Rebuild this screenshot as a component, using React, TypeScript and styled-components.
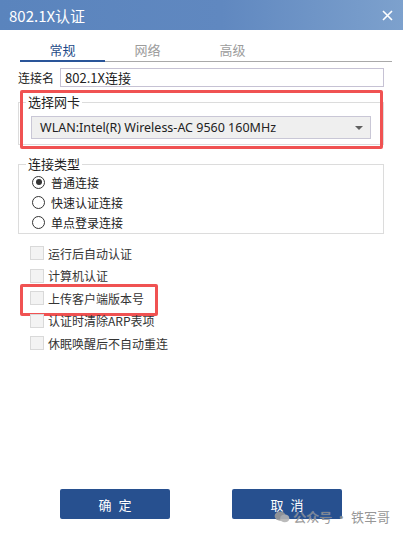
import React from 'react'
import styled, { createGlobalStyle } from 'styled-components'

const GlobalStyle = createGlobalStyle`
  html, body {
    margin: 0;
    padding: 0;
    background: #ffffff;
  }
  body {
    font-family: "Noto Sans CJK SC", "Noto Sans", sans-serif;
    color: #222;
  }
`

const tabs = ['常规', '网络', '高级']
const radios = ['普通连接', '快速认证连接', '单点登录连接']
const options = ['运行后自动认证', '计算机认证', '上传客户端版本号', '认证时清除ARP表项', '休眠唤醒后不自动重连']

const App: React.FC = () => {
  return (
    <Window>
      <GlobalStyle />
      <TitleBar>
        <Title>802.1X认证</Title>
        <Close>
          <svg width="11" height="11" viewBox="0 0 11 11">
            <path d="M1 1L10 10M10 1L1 10" stroke="#fff" strokeWidth="1.6" />
          </svg>
        </Close>
      </TitleBar>

      <Body>
        <TabBar>
          {tabs.map((t, i) => (
            <Tab key={t} $active={i === 0}>
              {t}
            </Tab>
          ))}
        </TabBar>

        <NameRow>
          <Label>连接名</Label>
          <Input>802.1X连接</Input>
        </NameRow>

        <Group $top={15} $bottom={5}>
          <Legend>选择网卡</Legend>
          <Select>
            <span>WLAN:Intel(R) Wireless-AC 9560 160MHz</span>
            <Caret />
          </Select>
          <Mark style={{ left: 1, top: -13, width: 357, height: 53 }} />
        </Group>

        <Group $top={19} $bottom={1}>
          <Legend>连接类型</Legend>
          <RadioList>
            {radios.map((r, i) => (
              <RadioRow key={r}>
                <Radio $checked={i === 0} />
                <span>{r}</span>
              </RadioRow>
            ))}
          </RadioList>
        </Group>

        <CheckList>
          {options.map((o, i) => (
            <CheckRow key={o}>
              <Box />
              <span>{o}</span>
              {i === 2 && <Mark style={{ left: -10, top: -3, width: 132, height: 26 }} />}
            </CheckRow>
          ))}
        </CheckList>

        <Footer>
          <Button>确定</Button>
          <Button>取消</Button>
          <Watermark>
            <svg width="16" height="12" viewBox="0 0 17 13">
              <ellipse cx="6.5" cy="5.5" rx="6" ry="5" fill="#9a9a9a" />
              <ellipse cx="11.5" cy="8" rx="5" ry="4.3" fill="#b4b4b4" />
            </svg>
            <span>公众号 · 铁军哥</span>
          </Watermark>
        </Footer>
      </Body>
    </Window>
  )
}

const Window = styled.div`
  width: 403px;
  height: 533px;
  display: flex;
  flex-direction: column;
  overflow: hidden;
`

const TitleBar = styled.div`
  height: 30px;
  flex: none;
  display: flex;
  align-items: center;
  justify-content: space-between;
  padding: 0 10px 0 9px;
  background: linear-gradient(90deg, #5a84bd 0%, #6088c0 55%, #7da1cd 100%);
`

const Title = styled.div`
  color: #fff;
  font-size: 15px;
  line-height: 1;
`

const Close = styled.div`
  display: flex;
  margin-top: 1px;
`

const Body = styled.div`
  flex: 1;
  display: flex;
  flex-direction: column;
  padding: 0 19px 14px 18px;
`

const TabBar = styled.div`
  display: flex;
  margin: 0 -8px 0 2px;
  height: 31px;
  border-bottom: 1px solid #a9a9a9;
`

const Tab = styled.div<{ $active?: boolean }>`
  width: 85px;
  display: flex;
  align-items: center;
  justify-content: center;
  padding-top: 9px;
  font-size: 13px;
  color: ${p => (p.$active ? '#1f4b88' : '#9c9c9c')};
  border-bottom: 2px solid ${p => (p.$active ? '#2a5599' : 'transparent')};
  margin-bottom: -1px;
`

const NameRow = styled.div`
  display: flex;
  align-items: center;
  margin-top: 6px;
  gap: 6px;
`

const Label = styled.span`
  font-size: 12px;
`

const Input = styled.div`
  flex: 1;
  height: 17px;
  border: 1px solid #c6c2d4;
  padding: 0 4px;
  font-size: 13px;
  line-height: 17px;
`

const Group = styled.div<{ $top: number; $bottom: number }>`
  position: relative;
  margin-top: ${p => p.$top}px;
  padding: 0 12px ${p => p.$bottom}px;
  border: 1px solid #dcdcdc;
`

const Legend = styled.div`
  width: fit-content;
  margin: -9px 0 6px -5px;
  padding: 0 2px;
  background: #fff;
  font-size: 13px;
  line-height: 16px;
`

const Select = styled.div`
  height: 21px;
  display: flex;
  align-items: center;
  justify-content: space-between;
  padding: 0 7px 0 8px;
  background: #efefef;
  border: 1px solid #c9c7d6;
  font-family: "Noto Sans", "Noto Sans CJK SC", sans-serif;
  font-size: 12.5px;
  color: #222;
`

const Caret = styled.div`
  width: 0;
  height: 0;
  border-left: 4px solid transparent;
  border-right: 4px solid transparent;
  border-top: 4px solid #606060;
`

const Mark = styled.div`
  position: absolute;
  border: 3px solid #f05252;
  border-radius: 2px;
  pointer-events: none;
`

const RadioList = styled.div`
  display: flex;
  flex-direction: column;
  margin-top: -6px;
  margin-left: 1px;
`

const RadioRow = styled.div`
  height: 20px;
  display: flex;
  align-items: center;
  gap: 6px;
  font-size: 12px;
`

const Radio = styled.span<{ $checked?: boolean }>`
  width: 11px;
  height: 11px;
  border: 1px solid #333;
  border-radius: 50%;
  display: flex;
  align-items: center;
  justify-content: center;
  &::after {
    content: '';
    width: 6px;
    height: 6px;
    border-radius: 50%;
    background: ${p => (p.$checked ? '#333' : 'transparent')};
  }
`

const CheckList = styled.div`
  display: flex;
  flex-direction: column;
  margin-top: 8px;
  padding-left: 12px;
`

const CheckRow = styled.div`
  position: relative;
  height: 22.5px;
  display: flex;
  align-items: center;
  gap: 4px;
  font-size: 12px;
  color: #333;
`

const Box = styled.span`
  width: 12px;
  height: 12px;
  background: #f3f3f3;
  border: 1px solid #d9d9d9;
`

const Footer = styled.div`
  position: relative;
  margin-top: auto;
  display: flex;
  justify-content: center;
  gap: 62px;
`

const Button = styled.div`
  width: 110px;
  height: 30px;
  display: flex;
  align-items: center;
  justify-content: center;
  padding-left: 7px;
  box-sizing: border-box;
  background: #27508f;
  border-radius: 2px;
  color: #fff;
  font-size: 13px;
  letter-spacing: 7px;
`

const Watermark = styled.div`
  position: absolute;
  right: -6px;
  bottom: -7px;
  display: flex;
  align-items: center;
  gap: 3px;
  font-size: 13px;
  color: #8c8c8c;
  opacity: 0.9;
  text-shadow: 0 0 1px rgba(255, 255, 255, 0.6);
`

export default App
